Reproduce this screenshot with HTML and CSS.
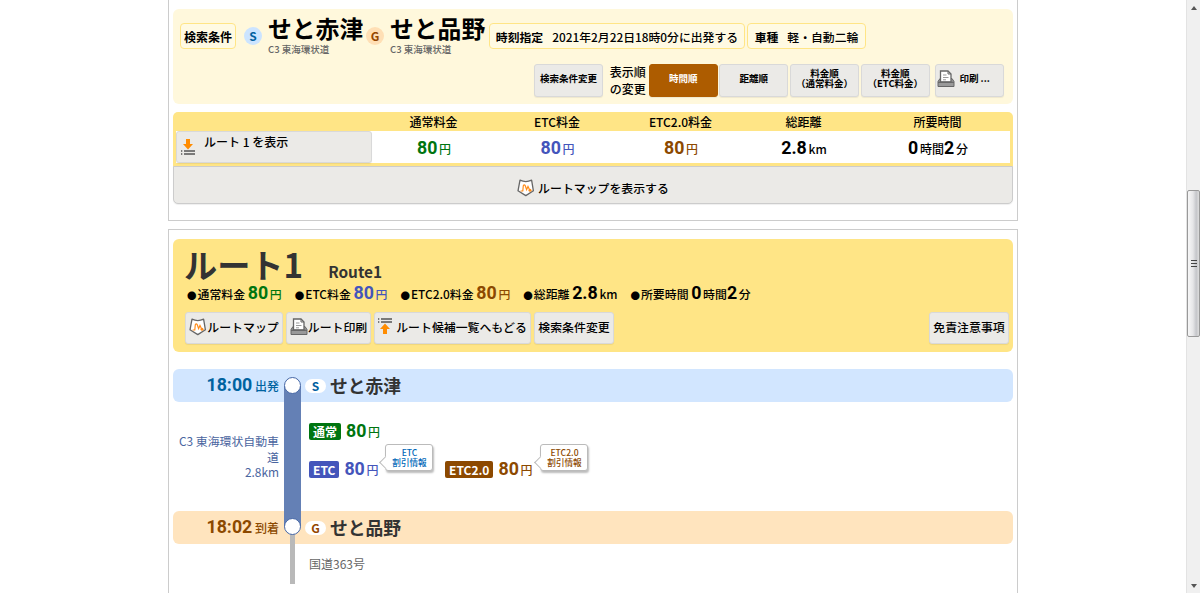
FILE: index.html
```html
<!DOCTYPE html>
<html lang="ja">
<head>
<meta charset="utf-8">
<title>ルート検索結果</title>
<link rel="stylesheet" href="styles.css">
</head>
<body>
<svg class="defs" width="0" height="0">
  <symbol id="map" viewBox="0 0 18 18"><path d="M3 1.2Q8.8 4 14.6 1.2L16.4 11.8 8.8 16.6 1 11.8Z" fill="#fff" stroke="#666" stroke-width="1.3" stroke-linejoin="round"/><path d="M3.6 12H5.8L6.3 6.8Q7.2 5 8.3 6.8L9.6 10.6 11 7.5 12.8 11.3" fill="none" stroke="#ff8c1a" stroke-width="1.2"/><circle cx="13" cy="11.3" r="1.5" fill="#ff8c1a"/></symbol>
  <symbol id="printer" viewBox="0 0 18 18"><path d="M3 8.5L1 11.5V16.5H17V11.5L15 8.5Z" fill="#999" stroke="#666" stroke-linejoin="round"/><path d="M3.5 12V1H11L14 4V12Z" fill="#fff" stroke="#666" stroke-width="1.3"/><path d="M11 1V4H14" fill="none" stroke="#666"/><path d="M6 5H9.5M6 7.5H11.5M6 9.8H9" stroke="#999"/><path d="M1 12.3H17" stroke="#666" stroke-width="1.2"/></symbol>
  <symbol id="down" viewBox="0 0 14 17"><path d="M5 1H9V6H12L7 11.5 2 6H5Z" fill="#ff8c00"/><path d="M0 13H1.3M0 16H1.3M3 13H14M3 16H14" stroke="#555" stroke-width="1.4"/></symbol>
  <symbol id="up" viewBox="0 0 14 17"><path d="M5 16H9V11H12L7 5.5 2 11H5Z" fill="#ff8c00"/><path d="M0 1H1.3M0 4H1.3M3 1H14M3 4H14" stroke="#555" stroke-width="1.4"/></symbol>
</svg>
<div class="window">
  <main class="page">
    <section class="panel summary">
      <div class="conditions">
        <div class="cond-row">
          <span class="tag">検索条件</span>
          <i class="mark start">S</i>
          <div class="ic"><b>せと赤津</b><small>C3 東海環状道</small></div>
          <i class="mark goal">G</i>
          <div class="ic"><b>せと品野</b><small>C3 東海環状道</small></div>
          <span class="tag when"><b>時刻指定</b>2021年2月22日18時0分に出発する</span>
          <span class="tag car"><b>車種</b>軽・自動二輪</span>
        </div>
        <div class="sort-row">
          <button class="btn sort">検索条件変更</button>
          <span class="sort-label">表示順<br>の変更</span>
          <button class="btn sort active">時間順</button>
          <button class="btn sort">距離順</button>
          <button class="btn sort">料金順<br>（通常料金）</button>
          <button class="btn sort">料金順<br>（ETC料金）</button>
          <button class="btn sort print"><svg width="18" height="18"><use href="#printer"/></svg>印刷 ...</button>
        </div>
      </div>
      <div class="table">
        <div class="thead"><span></span><span>通常料金</span><span>ETC料金</span><span>ETC2.0料金</span><span>総距離</span><span>所要時間</span></div>
        <div class="trow">
          <button class="btn show"><svg width="14" height="17"><use href="#down"/></svg><span>ルート 1 を表示</span></button>
          <span class="green"><b>80</b> 円</span><span class="blue"><b>80</b> 円</span><span class="brown"><b>80</b> 円</span><span><b>2.8</b> km</span><span><b>0</b> 時間<b>2</b> 分</span>
        </div>
      </div>
      <button class="btn showmap"><svg width="18" height="18"><use href="#map"/></svg>ルートマップを表示する</button>
    </section>

    <section class="panel route">
      <header class="route-head">
        <h1>ルート1<small>Route1</small></h1>
        <ul class="facts">
          <li><i>●</i>通常料金 <span class="green"><b>80</b> 円</span></li>
          <li><i>●</i>ETC料金 <span class="blue"><b>80</b> 円</span></li>
          <li><i>●</i>ETC2.0料金 <span class="brown"><b>80</b> 円</span></li>
          <li><i>●</i>総距離 <b>2.8</b> km</li>
          <li><i>●</i>所要時間 <b>0</b> 時間<b>2</b> 分</li>
        </ul>
        <div class="tools">
          <button class="btn w98"><svg width="18" height="18"><use href="#map"/></svg>ルートマップ</button>
          <button class="btn w85"><svg width="18" height="18"><use href="#printer"/></svg>ルート印刷</button>
          <button class="btn w157"><svg class="upicon" width="14" height="17"><use href="#up"/></svg>ルート候補一覧へもどる</button>
          <button class="btn w80">検索条件変更</button>
          <button class="btn w80 last">免責注意事項</button>
        </div>
      </header>

      <div class="stop depart">
        <div class="time"><b>18:00</b> 出発</div>
        <div class="rail"><i class="node"></i></div>
        <i class="pill">S</i><h2>せと赤津</h2>
      </div>
      <div class="leg">
        <div class="road">C3 東海環状自動車道<br>2.8km</div>
        <div class="rail"></div>
        <div class="fares">
          <div class="fare green"><i class="chip">通常</i><b>80</b> 円</div>
          <div class="fare-row">
            <div class="fare blue"><i class="chip">ETC</i><b>80</b> 円<a class="bubble info">ETC<br>割引情報</a></div>
            <div class="fare brown"><i class="chip">ETC2.0</i><b>80</b> 円<a class="bubble">ETC2.0<br>割引情報</a></div>
          </div>
        </div>
      </div>
      <div class="stop arrive">
        <div class="time"><b>18:02</b> 到着</div>
        <div class="rail"><i class="node"></i></div>
        <i class="pill">G</i><h2>せと品野</h2>
      </div>
      <div class="after"><i class="thin"></i><span>国道363号</span></div>
    </section>
  </main>
  <aside class="scroll"><i class="arrow top"></i><i class="thumb"><s></s><s></s><s></s></i><i class="arrow bottom"></i></aside>
</div>
</body>
</html>
```
FILE: styles.css
```css
* { box-sizing: border-box; }
body { margin: 0; height: 593px; overflow: hidden; background: #fff; color: #000; font: 500 12px/18px "Noto Sans CJK JP", "Noto Sans", sans-serif; }
i { font-style: normal; }
h1, h2, ul { margin: 0; padding: 0; }
button { font: inherit; color: inherit; padding: 0; }
b { font-weight: 700; }
.defs { position: absolute; }
.window { display: flex; height: 593px; }
.page { width: 850px; margin-left: 168px; height: 593px; overflow: hidden; }
.panel { border: 1px solid #ccc; padding: 0 4px; }
.green { color: #007510; }
.blue { color: #4455bb; }
.brown { color: #8c4900; }
.summary { height: 221px; border-top: 0; padding-top: 9px; }
.conditions { height: 95px; border-radius: 6px; background: #fff8dc; }
.cond-row { display: flex; height: 55px; padding-left: 7px; }
.tag { display: block; flex: none; width: 56px; height: 26px; margin-top: 14px; border: 1px solid #ffe586; border-radius: 4px; background: #fffae3; line-height: 25px; white-space: nowrap; text-align: center; font-weight: 700; }
.mark { width: 18px; height: 18px; margin: 18px 7px 0 8px; border-radius: 50%; background: #cce4ff; color: #0060a0; text-align: center; line-height: 18px; font-weight: 700; flex: none; }
.mark.goal { margin: 18px 6px 0 2px; background: #ffdfb5; color: #944600; }
.ic { width: 95px; flex: none; }
.ic b { display: block; font-size: 23.8px; line-height: 30px; height: 34px; padding-top: 4px; margin-left: -1px; white-space: nowrap; }
.ic small { display: block; font-size: 9.5px; line-height: 13px; color: #666; margin-left: -1px; }
.goal + .ic b, .goal + .ic small { margin-left: 0; }
.when { width: 256px; margin-left: 4px; font-weight: 500; }
.when b, .car b { margin-right: 9px; }
.car { width: 119px; margin-left: 2px; font-weight: 500; }
.when, .car { font-size: 11.85px; }
.btn { flex: none; border: 1px solid #d9d9d9; border-radius: 3px; background: #ebeae7; box-shadow: 0 1px 1px #0001; }
.sort-row { display: flex; padding-left: 361px; height: 33px; }
.sort { width: 69px; height: 33px; margin-right: 1.7px; padding-bottom: 3px; font-size: 9.5px; line-height: 9.6px; white-space: nowrap; display: flex; align-items: center; justify-content: center; text-align: center; font-weight: 700; }
.sort-label { width: 38px; margin: -1px 1px 0 5px; line-height: 17px; }
.active { background: #ad5c00; border-color: #ad5c00; color: #fff; }
.print { margin-left: 4px; justify-content: flex-start; padding-left: 1px; gap: 4px; }
.table { height: 55px; margin-top: 8px; padding: 1px 3px 0; border-radius: 5px 5px 0 0; background: #ffe586; }
.thead, .trow { display: grid; grid-template-columns: 196px 123px 124px 123px 123px 145px; text-align: center; }
.thead { height: 18px; }
.trow { height: 32px; background: #fff; line-height: 33px; }
.trow b, .facts b, .fare b, .time b { font-family: Roboto, "Liberation Sans", sans-serif; font-size: 17.8px; margin-right: -1px; }
.trow span { padding-left: 1px; }
.show { width: 196px; height: 32px; display: flex; padding: 3px 0 0 4px; line-height: 14px; }
.show span { margin-left: 8px; }
.show svg { margin-top: 3px; }
.showmap { display: flex; align-items: center; justify-content: center; gap: 3px; width: 840px; height: 38px; margin-top: -1px; padding-top: 5px; border-color: #ccc; border-radius: 0 0 5px 5px; }
.showmap, .tools .btn { font-size: 11.9px; }
.route { height: 400px; margin-top: 8px; padding-top: 9px; }
.route-head { height: 113px; padding-left: 12px; border-radius: 6px; background: #ffe586; }
h1 { height: 44px; color: #333; font-size: 33.2px; line-height: 50px; font-weight: 700; margin-left: -1px; }
h1 small { margin-left: 25px; font-size: 15.4px; }
.facts { display: flex; height: 29px; padding-left: 2px; gap: 13px; line-height: 20px; list-style: none; white-space: nowrap; font-size: 11.9px; }
.facts i { margin-right: 1px; font-size: 9.5px; }
.tools { display: flex; gap: 3px; padding-right: 4px; }
.tools .btn { display: flex; align-items: center; justify-content: center; height: 32px; padding-bottom: 2px; white-space: nowrap; }
.w98 { width: 98px; }
.w85 { width: 85px; }
.tools .w157 { width: 157px; gap: 4px; }
.w80 { width: 80px; }
.last { margin-left: auto; }
.upicon { margin-top: -1px; }
.stop { display: flex; align-items: center; height: 33px; margin-top: 17px; border-radius: 6px; background: #d2e6ff; }
.time { width: 106px; text-align: right; color: #0063a0; }
.time b { margin-right: 0; }
.rail { position: relative; width: 17px; height: 33px; margin: 0 5px; flex: none; }
.depart .rail { background: linear-gradient(transparent 17px, #6480b5 17px); }
.arrive .rail { background: linear-gradient(#6480b5 16px, transparent 16px), linear-gradient(90deg, transparent 6px, #b9b9b9 6px 11px, transparent 11px); }
.node { position: absolute; left: 0; top: 8px; width: 17px; height: 17px; border: 1px solid #4566a5; border-radius: 50%; background: #fff; }
.arrive .node { top: 7px; }
.pill { width: 21px; height: 14px; margin-left: -1px; border-radius: 7px; background: #fff; color: #0060a0; font-weight: 700; line-height: 14px; text-align: center; }
h2 { margin-left: 4px; color: #333; font-size: 17.8px; line-height: 33px; font-weight: 700; }
.leg { display: flex; height: 109px; }
.road { width: 106px; padding: 31px 0 0 4px; text-align: right; line-height: 15.5px; color: #4a65a0; font-size: 11.9px; font-weight: 400; word-break: break-all; }
.leg .rail { height: 109px; background: #6480b5; }
.fares { padding: 19px 0 0 3px; }
.fare { position: relative; display: flex; align-items: baseline; height: 20px; line-height: 20px; white-space: pre; }
.fare-row { display: flex; margin-top: 18px; }
.fare-row .fare { width: 136px; }
.chip { height: 17px; padding: 0 4px; margin-right: 5px; border-radius: 2px; color: #fff; line-height: 17px; font-weight: 700; }
.green .chip { background: #007510; }
.blue .chip { background: #4455bb; }
.brown .chip { background: #8c4900; }
.bubble { position: absolute; left: 76px; top: -15px; width: 48px; height: 27px; border: 1px solid #bbb; border-radius: 3px; background: #fff; box-shadow: 1px 2px 2px #0004; font-size: 8.6px; line-height: 10px; padding: 2px 0 0 1px; text-align: center; }
.brown .bubble { left: 95px; }
.bubble::before { content: ""; position: absolute; left: -5px; top: 13px; width: 8px; height: 8px; border: solid #bbb; border-width: 0 0 1px 1px; background: #fff; transform: rotate(45deg); }
.info { color: #0068b8; }
.arrive { margin-top: 0; background: #ffe4be; }
.arrive .time { color: #8c4900; }
.arrive .pill { color: #944600; }
.after { display: flex; height: 40px; color: #666; font-weight: 400; }
.thin { width: 5px; height: 40px; margin-left: 117px; background: #b9b9b9; }
.after span { margin: 11px 0 0 14px; }
.scroll { display: flex; flex-direction: column; align-items: center; width: 14px; margin-left: auto; border-left: 1px solid #e3e3e3; background: #f0f0f0; }
.arrow { margin-top: 6px; border: 3px solid transparent; border-top: 0; border-bottom: 4px solid #555; }
.thumb { display: flex; flex-direction: column; align-items: center; justify-content: center; gap: 2px; width: 13px; height: 147px; margin-top: 180px; border: 1px solid #999; border-radius: 2px; background: linear-gradient(90deg, #f7f7f7, #e6e6e8 45%, #c5c6ca 75%, #ddd); }
.thumb s { width: 6px; height: 1px; background: #444; }
.bottom { margin: auto 0 5px; transform: rotate(180deg); }
```
